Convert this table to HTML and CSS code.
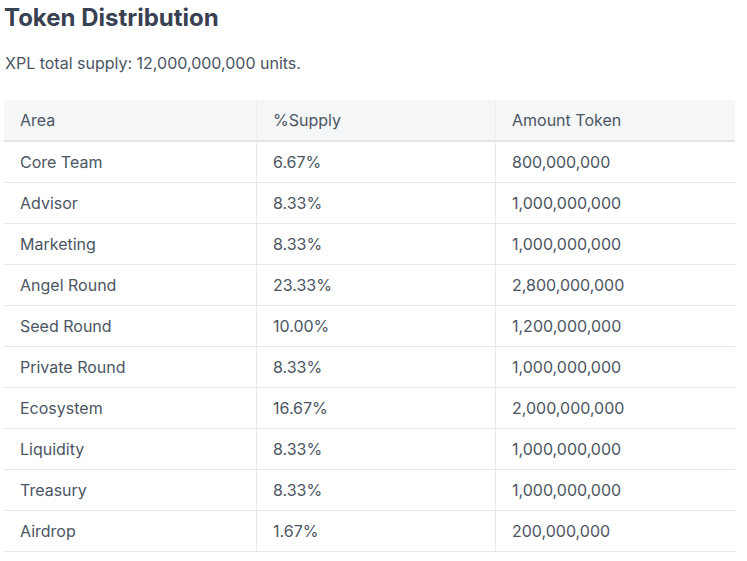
FILE: index.html
```html
<!DOCTYPE html>
<html lang="en">
<head>
<meta charset="utf-8">
<link rel="stylesheet" href="styles.css">
</head>
<body>
<main class="page">
  <h2 class="title">Token Distribution</h2>
  <p class="lead">XPL total supply: 12,000,000,000 units.</p>
  <table class="dist">
    <thead>
      <tr><th class="c1">Area</th><th class="c2">%Supply</th><th>Amount Token</th></tr>
    </thead>
    <tbody>
      <tr><td>Core Team</td><td>6.67%</td><td>800,000,000</td></tr>
      <tr><td>Advisor</td><td>8.33%</td><td>1,000,000,000</td></tr>
      <tr><td>Marketing</td><td>8.33%</td><td>1,000,000,000</td></tr>
      <tr><td>Angel Round</td><td>23.33%</td><td>2,800,000,000</td></tr>
      <tr><td>Seed Round</td><td>10.00%</td><td>1,200,000,000</td></tr>
      <tr><td>Private Round</td><td>8.33%</td><td>1,000,000,000</td></tr>
      <tr><td>Ecosystem</td><td>16.67%</td><td>2,000,000,000</td></tr>
      <tr><td>Liquidity</td><td>8.33%</td><td>1,000,000,000</td></tr>
      <tr><td>Treasury</td><td>8.33%</td><td>1,000,000,000</td></tr>
      <tr><td>Airdrop</td><td>1.67%</td><td>200,000,000</td></tr>
    </tbody>
  </table>
</main>
</body>
</html>
```

FILE: styles.css
```css
html, body {
  margin: 0;
  padding: 0;
  background: #ffffff;
}
body {
  font-family: Inter, "Noto Sans", sans-serif;
  color: #4b5563;
}
.page {
  padding: 0 12px 0 4px;
}
.title {
  margin: 0;
  padding-top: 3px;
  font-size: 24px;
  line-height: 30px;
  font-weight: 700;
  color: #374151;
}
.lead {
  margin: 19px 0 0 1px;
  font-size: 16px;
  line-height: 22px;
  color: #4b5563;
}
.dist {
  margin-top: 26px;
  width: 731px;
  border-collapse: collapse;
  font-size: 16px;
  table-layout: fixed;
}
.dist th, .dist td {
  text-align: left;
  padding: 0 16px;
  height: 40px;
  border-bottom: 1px solid #e5e7eb;
  border-left: 1px solid #e5e7eb;
}
.dist th:first-child, .dist td:first-child {
  border-left: none;
}
.dist th {
  background: #f5f6f8;
  font-weight: 400;
  color: #4b5563;
  height: 40px;
  border-bottom: 2px solid #e3e5e8;
  border-left-color: #eceef1;
}
.c1 { width: 220px; }
.c2 { width: 206px; }
```
